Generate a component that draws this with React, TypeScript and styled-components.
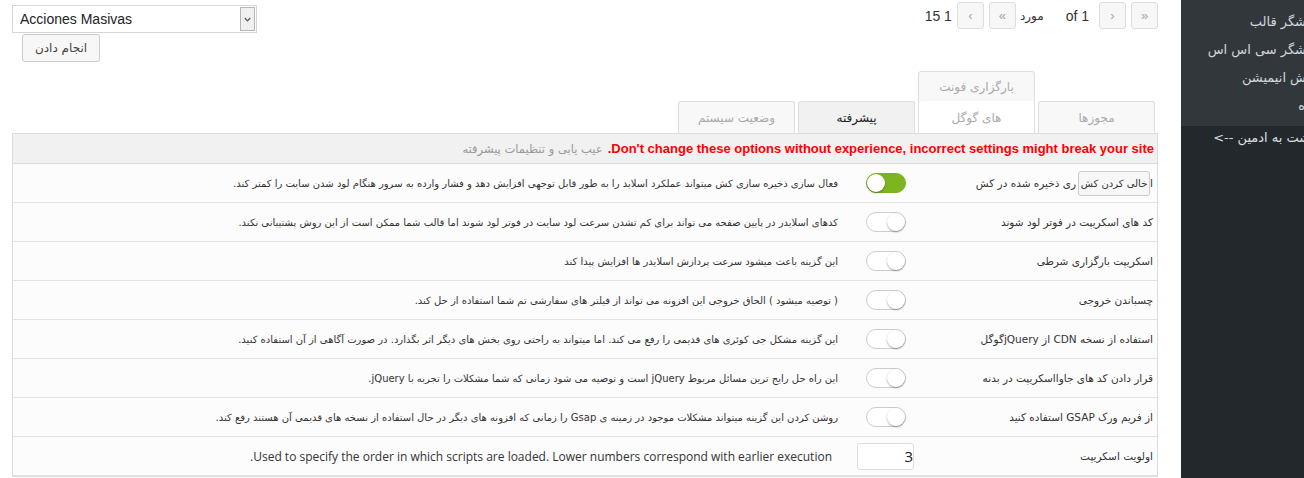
import React from "react";
import styled, { createGlobalStyle } from "styled-components";

const GlobalStyle = createGlobalStyle`
  html, body { margin: 0; padding: 0; overflow: hidden; background: #fff; }
  body { font-family: "Liberation Sans", "DejaVu Sans", sans-serif; color: #333; }
  #root { width: 1304px; height: 478px; overflow: hidden; }
`;

const Page = styled.div`
  display: grid;
  grid-template-columns: 1181px 160px;
  width: 1341px;
  height: 478px;
`;

const Main = styled.main`
  padding: 0 23px 0 12px;
  min-width: 0;
`;

const TopBar = styled.div`
  display: flex;
  justify-content: space-between;
  align-items: flex-start;
  height: 71px;
`;

const BulkBox = styled.div`
  display: flex;
  flex-direction: column;
  align-items: flex-start;
  padding-top: 5px;
`;

const SelectBox = styled.div`
  width: 245px;
  height: 28px;
  box-sizing: border-box;
  border: 1px solid #d6d6d6;
  background: #fff;
  display: flex;
  align-items: stretch;
  justify-content: space-between;
  padding: 1px;
`;

const SelectText = styled.span`
  display: flex;
  align-items: center;
  padding-left: 6px;
  font-size: 14px;
  color: #222;
`;

const SelectArrow = styled.span`
  width: 15px;
  box-sizing: border-box;
  border: 1px solid #b5b5b5;
  background: #f0f0f0;
  display: flex;
  align-items: center;
  justify-content: center;
`;

const ApplyButton = styled.button`
  margin: 1px 0 0 10px;
  width: 78px;
  height: 28px;
  box-sizing: border-box;
  border: 1px solid #ccc;
  border-radius: 3px;
  background: #f7f7f7;
  color: #444;
  font-family: "DejaVu Sans", sans-serif;
  font-size: 12px;
  padding: 0;
`;

const Pagination = styled.div`
  display: flex;
  align-items: center;
  padding-top: 2px;
  font-family: "Liberation Sans", "DejaVu Sans", sans-serif;
  font-size: 14px;
  color: #333;
`;

const PageText = styled.span<{ $gap: number }>`
  margin-right: ${(p) => p.$gap}px;
  white-space: nowrap;
`;

const PageWord = styled.span<{ $gap: number }>`
  margin-right: ${(p) => p.$gap}px;
  font-family: "DejaVu Sans", sans-serif;
  font-size: 12px;
  white-space: nowrap;
`;

const PageButton = styled.span<{ $gap: number }>`
  width: 27px;
  height: 27px;
  box-sizing: border-box;
  border: 1px solid #ddd;
  border-radius: 3px;
  background: #f7f7f7;
  color: #a0a5aa;
  font-size: 13px;
  display: flex;
  align-items: center;
  justify-content: center;
  margin-right: ${(p) => p.$gap}px;
`;

const TabStrip = styled.div`
  direction: rtl;
  display: flex;
  flex-direction: column;
  padding-right: 3px;
`;

const TabRow = styled.div<{ $overlap?: boolean }>`
  display: flex;
  gap: 3px;
  margin-top: ${(p) => (p.$overlap ? "-1px" : "0")};
`;

type TabKind = "plain" | "white" | "active" | "upper";

const Tab = styled.div<{ $kind: TabKind; $offset?: number }>`
  width: 117px;
  height: ${(p) => (p.$kind === "upper" ? "31px" : "32px")};
  box-sizing: border-box;
  margin-right: ${(p) => p.$offset ?? 0}px;
  border: 1px solid #dedede;
  border-bottom: ${(p) => (p.$kind === "upper" ? "1px solid #dedede" : "none")};
  border-top-color: ${(p) => (p.$kind === "white" ? "transparent" : "#dedede")};
  border-radius: 3px 3px 0 0;
  background: ${(p) =>
    p.$kind === "active" ? "#f1f1f1" : p.$kind === "white" ? "#fff" : "#f8f8f8"};
  color: ${(p) => (p.$kind === "active" ? "#222" : "#aaa")};
  font-family: "DejaVu Sans", sans-serif;
  font-size: 12px;
  display: flex;
  align-items: center;
  justify-content: center;
`;

const Panel = styled.section`
  direction: rtl;
  border: 1px solid #dcdcdc;
  background: #fcfcfc;
`;

const PanelHeader = styled.div`
  height: 29px;
  border-bottom: 1px solid #dcdcdc;
  background: #f1f1f1;
  display: flex;
  align-items: center;
  gap: 5px;
  padding-right: 3px;
`;

const Warning = styled.span`
  color: #f00;
  font-family: "Liberation Sans", sans-serif;
  font-weight: bold;
  font-size: 13px;
`;

const HeaderTitle = styled.span`
  color: #999;
  font-family: "DejaVu Sans", sans-serif;
  font-size: 11.5px;
`;

const Row = styled.div`
  height: 38px;
  border-bottom: 1px solid #e2e2e2;
  display: flex;
  align-items: center;
`;

const LabelCell = styled.div`
  width: 233px;
  height: 100%;
  padding-right: 4px;
  display: flex;
  align-items: center;
  font-family: "DejaVu Sans", sans-serif;
  font-size: 10.5px;
  color: #333;
  white-space: nowrap;
  flex-shrink: 0;
`;

const ClearCacheButton = styled.button`
  width: 72px;
  height: 25px;
  margin: 0 0 0 2px;
  box-sizing: border-box;
  border: 1px solid #ccc;
  border-radius: 3px;
  background: #f7f7f7;
  color: #333;
  font-family: "DejaVu Sans", sans-serif;
  font-size: 10px;
  padding: 0;
`;

const Switch = styled.span<{ $on?: boolean }>`
  position: relative;
  width: 40px;
  height: 20px;
  box-sizing: border-box;
  border-radius: 10px;
  border: 1px solid ${(p) => (p.$on ? "#78b21c" : "#ccc")};
  background: ${(p) => (p.$on ? "#7db41f" : "#fff")};
  margin-right: 14px;
  flex-shrink: 0;
  &::after {
    content: "";
    position: absolute;
    top: 0;
    ${(p) => (p.$on ? "right: 20px;" : "right: 0;")}
    width: 18px;
    height: 18px;
    border-radius: 50%;
    background: #fff;
    box-shadow: 0 1px 2px rgba(0, 0, 0, 0.35);
  }
`;

const NumberBox = styled.span`
  width: 57px;
  height: 27px;
  box-sizing: border-box;
  border: 1px solid #ddd;
  border-radius: 3px;
  background: #fff;
  margin-right: 6px;
  display: flex;
  align-items: center;
  padding-left: 7px;
  direction: ltr;
  justify-content: flex-end;
  font-family: "Open Sans", sans-serif;
  font-size: 15px;
  color: #222;
  flex-shrink: 0;
`;

const Desc = styled.div<{ $gap: number; $latin?: boolean }>`
  margin-right: ${(p) => p.$gap}px;
  font-family: ${(p) => (p.$latin ? '"Open Sans", sans-serif' : '"DejaVu Sans", sans-serif')};
  font-size: ${(p) => (p.$latin ? "12px" : "10px")};
  color: #333;
  white-space: nowrap;
`;

const Sidebar = styled.aside`
  background: #23282d;
  direction: rtl;
  font-family: "DejaVu Sans", sans-serif;
`;

const SubMenu = styled.ul`
  margin: 0;
  padding: 8px 0 0;
  height: 126px;
  box-sizing: border-box;
  list-style: none;
  background: #32373c;
`;

const SubItem = styled.li`
  color: rgba(240, 245, 250, 0.85);
  font-size: 13px;
  line-height: 28px;
  padding-right: 10px;
  white-space: nowrap;
`;

const BackLink = styled.div`
  color: rgba(240, 245, 250, 0.9);
  font-size: 13px;
  line-height: 24px;
  padding-right: 10px;
  white-space: nowrap;
`;

type Setting = { label: string; desc: string; on?: boolean };

const settings: Setting[] = [
  {
    label: "ری ذخیره شده در کش",
    desc: "فعال سازی ذخیره سازی کش میتواند عملکرد اسلاید را به طور قابل توجهی افزایش دهد و فشار وارده به سرور هنگام لود شدن سایت را کمتر کند.",
    on: true,
  },
  {
    label: "کد های اسکریپت در فوتر لود شوند",
    desc: "کدهای اسلایدر در پایین صفحه می تواند برای کم تشدن سرعت لود سایت در فوتر لود شوند اما قالب شما ممکن است از این روش پشتیبانی نکند.",
  },
  {
    label: "اسکریپت بارگزاری شرطی",
    desc: "این گزینه باعث میشود سرعت پردازش اسلایدر ها افزایش پیدا کند",
  },
  {
    label: "چسباندن خروجی",
    desc: "( توصیه میشود ) الحاق خروجی این افزونه می تواند از فیلتر های سفارشی تم شما استفاده از حل کند.",
  },
  {
    label: "استفاده از نسخه CDN از jQueryگوگل",
    desc: "این گزینه مشکل جی کوئری های قدیمی را رفع می کند. اما میتواند به راحتی روی بخش های دیگر اثر بگذارد. در صورت آگاهی از آن استفاده کنید.",
  },
  {
    label: "قرار دادن کد های جاوااسکریپت در بدنه",
    desc: "این راه حل رایج ترین مسائل مربوط jQuery است و توصیه می شود زمانی که شما مشکلات را تجربه با jQuery.",
  },
  {
    label: "از فریم ورک GSAP استفاده کنید",
    desc: "روشن کردن این گزینه میتواند مشکلات موجود در زمینه ی Gsap را زمانی که افزونه های دیگر در حال استفاده از نسخه های قدیمی آن هستند رفع کند.",
  },
];

const Chevron = () => (
  <svg width="7" height="5" viewBox="0 0 7 5">
    <path d="M0.8 1 L3.5 3.8 L6.2 1" fill="none" stroke="#555" strokeWidth="1.2" />
  </svg>
);

export default function App() {
  return (
    <>
      <GlobalStyle />
      <Page>
        <Main>
          <TopBar>
            <BulkBox>
              <SelectBox>
                <SelectText>Acciones Masivas</SelectText>
                <SelectArrow>
                  <Chevron />
                </SelectArrow>
              </SelectBox>
              <ApplyButton>انجام دادن</ApplyButton>
            </BulkBox>
            <Pagination>
              <PageText $gap={5}>15 1</PageText>
              <PageButton $gap={5}>‹</PageButton>
              <PageButton $gap={4}>«</PageButton>
              <PageWord $gap={22}>مورد</PageWord>
              <PageText $gap={10}>of 1</PageText>
              <PageButton $gap={5}>›</PageButton>
              <PageButton $gap={0}>»</PageButton>
            </Pagination>
          </TopBar>

          <TabStrip>
            <TabRow>
              <Tab $kind="upper" $offset={120}>
                بارگزاری فونت
              </Tab>
            </TabRow>
            <TabRow $overlap>
              <Tab $kind="plain">مجوزها</Tab>
              <Tab $kind="white">های گوگل</Tab>
              <Tab $kind="active">پیشرفته</Tab>
              <Tab $kind="plain">وضعیت سیستم</Tab>
            </TabRow>
          </TabStrip>

          <Panel>
            <PanelHeader>
              <Warning>
                Don't change these options without experience, incorrect settings might break your site.
              </Warning>
              <HeaderTitle>عیب یابی و تنظیمات پیشرفته</HeaderTitle>
            </PanelHeader>
            {settings.map((s, i) => (
              <Row key={i}>
                <LabelCell>
                  {i === 0 && (
                    <>
                      ا<ClearCacheButton>خالی کردن کش</ClearCacheButton>
                    </>
                  )}
                  {s.label}
                </LabelCell>
                <Switch $on={s.on} />
                <Desc $gap={28}>{s.desc}</Desc>
              </Row>
            ))}
            <Row>
              <LabelCell>اولویت اسکریپت</LabelCell>
              <NumberBox>3</NumberBox>
              <Desc $gap={25} $latin>
                Used to specify the order in which scripts are loaded. Lower numbers correspond with earlier execution.
              </Desc>
            </Row>
          </Panel>
        </Main>

        <Sidebar>
          <SubMenu>
            <SubItem>ویرایشگر قالب</SubItem>
            <SubItem>ویرایشگر سی اس اس</SubItem>
            <SubItem>ویرایش انیمیشن</SubItem>
            <SubItem>درباره</SubItem>
          </SubMenu>
          <BackLink>بازگشت به ادمین --&gt;</BackLink>
        </Sidebar>
      </Page>
    </>
  );
}
